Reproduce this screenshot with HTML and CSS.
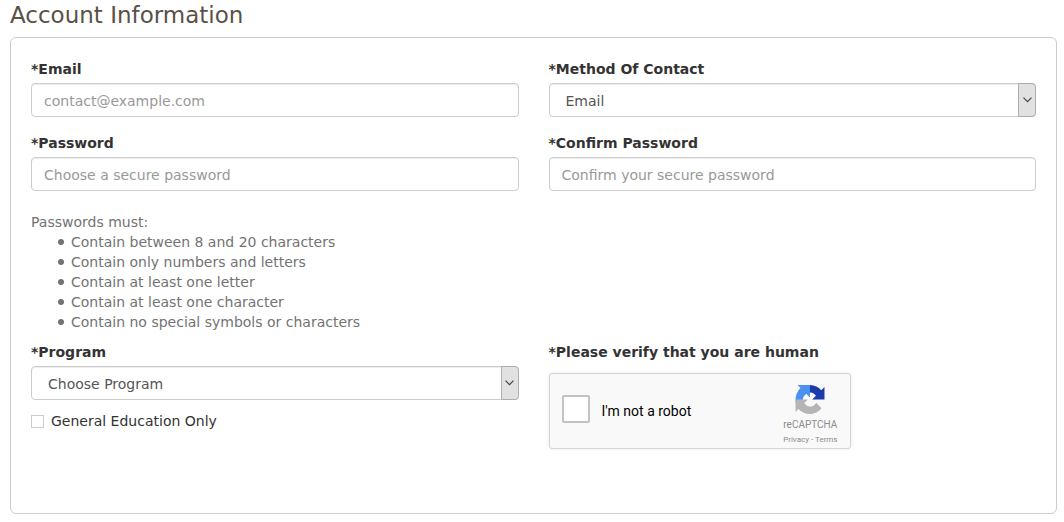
FILE: index.html
```html
<!DOCTYPE html>
<html lang="en">
<head>
<meta charset="utf-8">
<title>Account Information</title>
<link rel="stylesheet" href="styles.css">
</head>
<body>
<h1 class="title">Account Information</h1>
<form class="panel">
  <div class="field">
    <label class="label" for="email">*Email</label>
    <input class="control" id="email" type="email" placeholder="contact@example.com">
  </div>
  <div class="field">
    <label class="label" for="method">*Method Of Contact</label>
    <div class="select">
      <select class="control" id="method"><option>Email</option><option>Phone</option></select>
      <span class="arrow"><svg width="9" height="6" viewBox="0 0 9 6"><path d="M.5 .7l4 4 4-4"/></svg></span>
    </div>
  </div>
  <div class="field">
    <label class="label" for="password">*Password</label>
    <input class="control" id="password" type="password" placeholder="Choose a secure password">
  </div>
  <div class="field">
    <label class="label" for="confirm">*Confirm Password</label>
    <input class="control" id="confirm" type="password" placeholder="Confirm your secure password">
  </div>
  <div class="rules">
    <p class="rules-title">Passwords must:</p>
    <ul class="rules-list">
      <li>Contain between 8 and 20 characters</li>
      <li>Contain only numbers and letters</li>
      <li>Contain at least one letter</li>
      <li>Contain at least one character</li>
      <li>Contain no special symbols or characters</li>
    </ul>
  </div>
  <div class="field">
    <label class="label" for="program">*Program</label>
    <div class="select">
      <select class="control" id="program"><option>Choose Program</option></select>
      <span class="arrow"><svg width="9" height="6" viewBox="0 0 9 6"><path d="M.5 .7l4 4 4-4"/></svg></span>
    </div>
    <label class="check"><input class="check-box" type="checkbox">General Education Only</label>
  </div>
  <div class="field">
    <label class="label" for="robot">*Please verify that you are human</label>
    <div class="captcha">
      <div class="robot"><input class="robot-box" id="robot" type="checkbox"><label class="robot-text" for="robot">I'm not a robot</label></div>
      <div class="brand">
        <svg width="30" height="30" viewBox="0 0 64 64">
          <path fill="#1c3aa9" d="M64 31.955l-.033-1.37V4.687l-7.16 7.16C50.948 4.674 42.033.093 32.05.093c-10.4 0-19.622 4.96-25.458 12.64l11.736 11.86a15.55 15.55 0 0 1 4.754-5.334c2.05-1.6 4.952-2.906 8.968-2.906.485 0 .86.057 1.135.163 4.976.393 9.288 3.14 11.828 7.124l-8.307 8.307L64 31.953"/>
          <path fill="#4a90f5" d="M31.862.094l-1.37.033H4.594l7.16 7.16C4.58 13.147 0 22.06 0 32.046c0 10.4 4.96 19.622 12.64 25.458L24.5 45.768a15.55 15.55 0 0 1-5.334-4.754c-1.6-2.05-2.906-4.952-2.906-8.968 0-.485.057-.86.163-1.135.393-4.976 3.14-9.288 7.124-11.828l8.307 8.307L31.86.095"/>
          <path fill="#b5b5b5" d="M.001 32.045l.033 1.37v25.898l7.16-7.16c5.86 7.173 14.774 11.754 24.76 11.754 10.4 0 19.622-4.96 25.458-12.64l-11.736-11.86a15.55 15.55 0 0 1-4.754 5.334c-2.05 1.6-4.952 2.906-8.968 2.906-.485 0-.86-.057-1.135-.163-4.976-.393-9.288-3.14-11.828-7.124l8.307-8.307c-10.522.04-22.4.066-27.295-.005"/>
        </svg>
        <span class="brand-name">reCAPTCHA</span>
        <span class="brand-links"><a href="#privacy">Privacy</a> - <a href="#terms">Terms</a></span>
      </div>
    </div>
  </div>
</form>
</body>
</html>
```
FILE: styles.css
```css
* { box-sizing: border-box; }
body {
  margin: 0;
  padding: 0 7px 8px 10px;
  background: #fff;
  color: #333;
  font: 14px/20px Verdana, "DejaVu Sans", sans-serif;
}
.title {
  margin: 0 0 7px;
  color: #5a5148;
  font-size: 23px;
  font-weight: 400;
  line-height: 30px;
}
.panel {
  display: grid;
  grid-template-columns: 1fr 1fr;
  gap: 16px 30px;
  padding: 21px 20px 64px;
  border: 1px solid #ccc;
  border-radius: 6px;
}
.label {
  display: block;
  margin-bottom: 4px;
  font-weight: 700;
}
.control {
  display: block;
  width: 100%;
  height: 34px;
  margin: 0;
  padding: 7px 12px 5px;
  border: 1px solid #ccc;
  border-radius: 4px;
  background: #fff;
  box-shadow: inset 0 1px 1px rgba(0, 0, 0, .075);
  color: #555;
  font: inherit;
}
.control::placeholder { color: #999; opacity: 1; }
.select { position: relative; }
.select .control { padding: 7px 28px 5px 16px; appearance: none; }
.arrow {
  position: absolute;
  top: 0;
  right: 0;
  display: flex;
  align-items: center;
  justify-content: center;
  width: 18px;
  height: 100%;
  border: 1px solid #adadad;
  border-radius: 0 4px 4px 0;
  background: #e1e1e1;
  pointer-events: none;
}
.arrow path { fill: none; stroke: #444; stroke-width: 1.2; }
.rules {
  grid-column: 1 / -1;
  margin: 5px 0 -6px;
  color: #737373;
}
.rules-title { margin: 0; }
.rules-list { margin: 0; padding-left: 27px; list-style: none; }
.rules-list li { display: flex; align-items: center; gap: 7px; }
.rules-list li::before {
  content: "";
  width: 6px;
  height: 6px;
  border-radius: 50%;
  background: #737373;
}
.check {
  display: flex;
  align-items: center;
  gap: 7px;
  margin-top: 11px;
}
.check-box, .robot-box {
  flex: none;
  margin: 0;
  border: 1px solid #ccc;
  background: #fff;
  appearance: none;
}
.check-box { width: 13px; height: 13px; }
.captcha {
  display: flex;
  justify-content: space-between;
  width: 302px;
  max-width: 100%;
  height: 76px;
  margin-top: 11px;
  padding: 0 12px;
  border: 1px solid #d3d3d3;
  border-radius: 3px;
  background: #f9f9f9;
  box-shadow: 0 0 4px rgba(0, 0, 0, .08);
  font-family: Roboto, sans-serif;
}
.robot {
  display: flex;
  align-items: center;
  gap: 12px;
  height: 70px;
  color: #000;
}
.robot-text { padding-top: 4px; }
.robot-box {
  width: 28px;
  height: 28px;
  border: 2px solid #c1c1c1;
  border-radius: 2px;
}
.brand {
  display: flex;
  flex-direction: column;
  align-items: center;
  padding-top: 11px;
  color: #8c8c8c;
}
.brand-name { margin-top: 4px; font-size: 10px; line-height: 14px; }
.brand-links { font-size: 8px; line-height: 16px; }
.brand-links a { color: inherit; text-decoration: none; }
```
